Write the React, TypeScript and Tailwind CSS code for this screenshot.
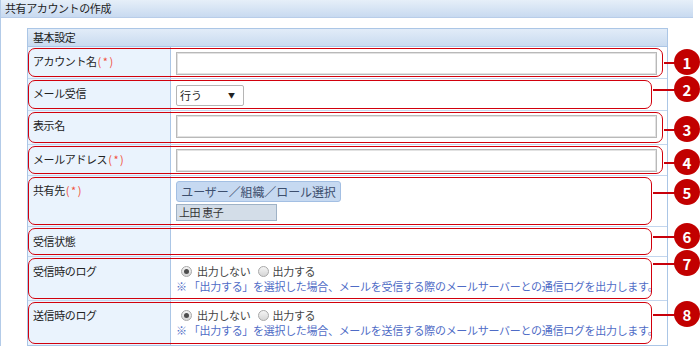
import React from "react";

type Row = {
  label: string;
  req?: boolean;
  h: string;
  wide: boolean;
  n: number;
  circleTop: string;
  lineTop: string;
  content: React.ReactNode;
};

function TextInput() {
  return (
    <div className="h-[23px] w-[481px] border border-[#b9b9b9] bg-white shadow-[inset_0_0_0_1px_#e2e2e2]" />
  );
}

function Radio({ checked }: { checked?: boolean }) {
  return (
    <span className="flex h-[11px] w-[11px] items-center justify-center rounded-full border border-[#a8a8a8] bg-gradient-to-b from-[#f4f4f4] to-[#d6d6d6]">
      {checked && <span className="h-[5px] w-[5px] rounded-full bg-[#4d4d4d]" />}
    </span>
  );
}

function LogOption({ kind }: { kind: string }) {
  return (
    <div className="flex flex-col pt-[6px]">
      <div className="flex items-center text-[11px] leading-[16px] tracking-[-0.3px] text-[#444]">
        <span className="ml-[5px]">
          <Radio checked />
        </span>
        <span className="ml-[5px]">出力しない</span>
        <span className="ml-[7px]">
          <Radio />
        </span>
        <span className="ml-[4px]">出力する</span>
      </div>
      <div className="text-[11px] leading-[14px] tracking-[-0.3px] text-[#4f6cc6] whitespace-nowrap">
        ※ 「出力する」を選択した場合、メールを{kind}する際のメールサーバーとの通信ログを出力します。
      </div>
    </div>
  );
}

const rows: Row[] = [
  {
    label: "アカウント名",
    req: true,
    h: "h-[32px]",
    wide: true,
    n: 1,
    circleTop: "top-[2px]",
    lineTop: "top-[15px]",
    content: (
      <div className="pt-[5px]">
        <TextInput />
      </div>
    ),
  },
  {
    label: "メール受信",
    h: "h-[32px]",
    wide: false,
    n: 2,
    circleTop: "top-[-3px]",
    lineTop: "top-[10px]",
    content: (
      <div className="pt-[6px]">
        <div className="flex h-[21px] w-[68px] items-center justify-between rounded-[2px] border border-[#b5b5b5] bg-white pl-[3px] pr-[8px] text-[11px] text-[#222]">
          <span>行う</span>
          <span className="text-[7px] leading-none">▼</span>
        </div>
      </div>
    ),
  },
  {
    label: "表示名",
    h: "h-[34px]",
    wide: true,
    n: 3,
    circleTop: "top-[5px]",
    lineTop: "top-[18px]",
    content: (
      <div className="pt-[4px]">
        <TextInput />
      </div>
    ),
  },
  {
    label: "メールアドレス",
    req: true,
    h: "h-[31px]",
    wide: true,
    n: 4,
    circleTop: "top-[4px]",
    lineTop: "top-[17px]",
    content: (
      <div className="pt-[4px]">
        <TextInput />
      </div>
    ),
  },
  {
    label: "共有先",
    req: true,
    h: "h-[51px]",
    wide: false,
    n: 5,
    circleTop: "top-[3px]",
    lineTop: "top-[16px]",
    content: (
      <div className="flex flex-col items-start pt-[5px]">
        <div className="flex h-[21px] w-[165px] items-center justify-center rounded-[3px] border border-[#a3bfe3] bg-[#c6d9f1] text-[12px] tracking-[-0.1px] text-[#3d4f6e]">
          ユーザー／組織／ロール選択
        </div>
        <div className="mt-[2px] flex h-[17px] w-[101px] items-center border border-[#9fb2c6] bg-[#d3dde8] pl-[2px] text-[11px] tracking-[-0.4px] text-[#333]">
          上田 恵子
        </div>
      </div>
    ),
  },
  {
    label: "受信状態",
    h: "h-[30px]",
    wide: false,
    n: 6,
    circleTop: "top-[-4px]",
    lineTop: "top-[9px]",
    content: null,
  },
  {
    label: "受信時のログ",
    h: "h-[44px]",
    wide: false,
    n: 7,
    circleTop: "top-[-7px]",
    lineTop: "top-[6px]",
    content: <LogOption kind="受信" />,
  },
  {
    label: "送信時のログ",
    h: "h-[44px]",
    wide: false,
    n: 8,
    circleTop: "top-[0px]",
    lineTop: "top-[13px]",
    content: <LogOption kind="送信" />,
  },
];

export default function App() {
  return (
    <div className="h-[348px] w-[700px] overflow-hidden bg-white font-['Noto_Sans_CJK_JP','Noto_Sans',sans-serif] text-[#222]">
      <div className="w-[693px] border-l border-[#b3cbe8]">
        <div className="flex h-[18px] items-center border-b border-[#b8cde9] bg-gradient-to-b from-[#e6eff9] to-[#c8daf0] pl-[4px] text-[11px] tracking-[-0.4px] text-[#222]">
          共有アカウントの作成
        </div>
        <div className="pl-[26px] pt-[10px]">
          <div className="w-[641px] border border-[#abc6e6]">
            <div className="flex h-[18px] items-center border-b border-[#abc6e6] bg-gradient-to-b from-[#e2ecf8] to-[#c9dbf0] pl-[5px] text-[11px] tracking-[-0.4px]">
              基本設定
            </div>
            {rows.map((r) => (
              <div
                key={r.n}
                className={`relative flex border-b border-[#c3d6ee] last:border-b-0 ${r.h}`}
              >
                <div className="w-[143px] shrink-0 border-r border-[#abc6e6] bg-[#eaf3fd] pl-[5px] pt-[6px] text-[11px] leading-[16px] tracking-[-0.4px] text-[#222]">
                  {r.label}
                  {r.req && (
                    <span className="ml-[1px] tracking-[1.5px] text-[#f0503c]">(*)</span>
                  )}
                </div>
                <div className="flex-1 pl-[5px]">{r.content}</div>

                <div
                  className={`pointer-events-none absolute left-0 top-[1px] bottom-[1px] rounded-[7px] border-[1.5px] border-[#d1000c] ${
                    r.wide ? "right-[4px]" : "right-[15px]"
                  }`}
                />
                <div
                  className={`pointer-events-none absolute h-[1.5px] bg-[#c8000a] ${r.lineTop} ${
                    r.wide ? "left-[636px] w-[12px]" : "left-[625px] w-[23px]"
                  }`}
                />
                <div
                  className={`absolute left-[646px] flex h-[26px] w-[26px] items-center justify-center rounded-full bg-[#c20000] text-[15px] font-bold leading-none text-white ${r.circleTop}`}
                >
                  {r.n}
                </div>
              </div>
            ))}
          </div>
        </div>
      </div>
    </div>
  );
}
